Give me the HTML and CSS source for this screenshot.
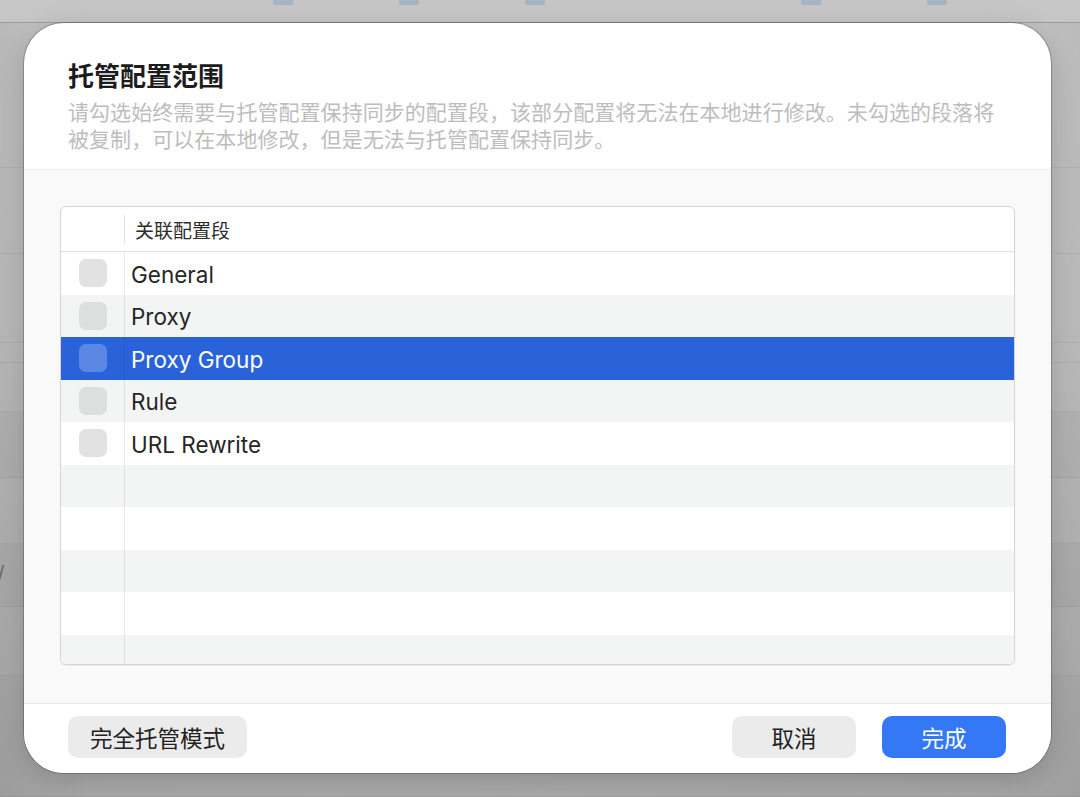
FILE: index.html
```html
<!DOCTYPE html>
<html lang="zh-CN">
<head>
<meta charset="utf-8">
<title>托管配置范围</title>
<link rel="stylesheet" href="styles.css">
</head>
<body>
<div class="backdrop">
  <div class="bg-toolbar">
    <span class="tb-icon"></span><span class="tb-text"></span>
    <span class="tb-icon"></span><span class="tb-text"></span>
    <span class="tb-icon"></span><span class="tb-text wide"></span>
    <span class="tb-icon"></span><span class="tb-text"></span>
    <span class="tb-icon"></span>
  </div>
  <div class="bg-row h145"></div>
  <div class="bg-row h86"></div>
  <div class="bg-row h89"></div>
  <div class="bg-row h20"></div>
  <div class="bg-row h49"><span class="bg-slash">/</span></div>
  <div class="bg-row h66 shade"></div>
  <div class="bg-row h66"></div>
  <div class="bg-row h63 shade"></div>
  <div class="bg-row h69"></div>
  <div class="bg-row h121 shade"></div>
</div>

<div class="sheet">
  <div class="sheet-head">
    <h1 class="title">托管配置范围</h1>
    <p class="desc">请勾选始终需要与托管配置保持同步的配置段，该部分配置将无法在本地进行修改。未勾选的段落将被复制，可以在本地修改，但是无法与托管配置保持同步。</p>
  </div>

  <div class="sheet-body">
    <div class="table">
      <div class="thead">
        <div class="th-check"></div>
        <div class="th-name">关联配置段</div>
      </div>
      <div class="tbody">
        <div class="row"><div class="cell-check"><span class="box"></span></div><div class="cell-name">General</div></div>
        <div class="row"><div class="cell-check"><span class="box"></span></div><div class="cell-name">Proxy</div></div>
        <div class="row selected"><div class="cell-check"><span class="box"></span></div><div class="cell-name">Proxy Group</div></div>
        <div class="row"><div class="cell-check"><span class="box"></span></div><div class="cell-name">Rule</div></div>
        <div class="row"><div class="cell-check"><span class="box"></span></div><div class="cell-name">URL Rewrite</div></div>
        <div class="row"><div class="cell-check"></div><div class="cell-name"></div></div>
        <div class="row"><div class="cell-check"></div><div class="cell-name"></div></div>
        <div class="row"><div class="cell-check"></div><div class="cell-name"></div></div>
        <div class="row"><div class="cell-check"></div><div class="cell-name"></div></div>
        <div class="row"><div class="cell-check"></div><div class="cell-name"></div></div>
      </div>
    </div>
  </div>

  <div class="sheet-foot">
    <button class="btn btn-mode">完全托管模式</button>
    <div class="spacer"></div>
    <button class="btn btn-cancel">取消</button>
    <button class="btn btn-done">完成</button>
  </div>
</div>
</body>
</html>
```

FILE: styles.css
```css
* { box-sizing: border-box; }

html, body {
  margin: 0;
  padding: 0;
  width: 1080px;
  height: 797px;
  overflow: hidden;
}

body {
  position: relative;
  font-family: "Noto Sans CJK SC", "Noto Sans", sans-serif;
  background: linear-gradient(to right, #b6b6b6 0%, #c6c6c6 8%, #c8c8c8 50%, #c4c4c4 92%, #b9b9b9 100%);
}

/* ---------- backdrop window ---------- */
.backdrop {
  display: flex;
  flex-direction: column;
  height: 797px;
  background: linear-gradient(to bottom, rgba(255,255,255,0.04) 0%, rgba(0,0,0,0) 40%, rgba(0,0,0,0.12) 100%);
}

.bg-toolbar {
  height: 23px;
  display: flex;
  align-items: flex-start;
  padding-left: 273px;
  border-bottom: 1px solid #9c9c9c;
  background: #c6c6c6;
}

.tb-icon {
  width: 20px;
  height: 5px;
  background: #a7b4c3;
  border-radius: 0 0 2px 2px;
}

.tb-text {
  width: 100px;
  height: 4px;
  margin-left: 6px;
}

.tb-text.wide { width: 250px; }

.bg-row {
  border-bottom: 1px solid rgba(0,0,0,0.05);
  position: relative;
}

.bg-row.shade { background: rgba(0,0,0,0.025); }

.h145 { height: 145px; }
.h86 { height: 86px; }
.h89 { height: 89px; }
.h20 { height: 20px; }
.h49 { height: 49px; }
.h66 { height: 66px; }
.h63 { height: 63px; }
.h69 { height: 69px; }
.h121 { height: 121px; }

.bg-slash {
  position: absolute;
  left: -2px;
  top: 198px;
  font-family: "Liberation Sans", sans-serif;
  font-size: 22px;
  color: #6e6e6e;
}

/* ---------- sheet ---------- */
.sheet {
  position: absolute;
  left: 24px;
  top: 23px;
  width: 1027px;
  height: 750px;
  border-radius: 40px;
  background: #ffffff;
  overflow: hidden;
  display: flex;
  flex-direction: column;
  box-shadow: 0 0 0 1px rgba(0,0,0,0.22), 0 8px 28px rgba(0,0,0,0.18);
}

.sheet-head {
  padding: 35px 44px 17px 44px;
  border-bottom: 1px solid #ececec;
}

.title {
  margin: 0;
  font-size: 26px;
  line-height: 34px;
  font-weight: 700;
  color: #1c1c1c;
}

.desc {
  margin: 6px 0 0 0;
  font-size: 21px;
  line-height: 27px;
  color: #bdbdbd;
  letter-spacing: 0.05px;
}

.sheet-body {
  flex: 1;
  background: #f9f9f9;
  padding: 36px 36px 0 36px;
}

/* ---------- table ---------- */
.table {
  height: 459px;
  border: 1px solid #d5d5d5;
  border-radius: 6px;
  background: #ffffff;
  overflow: hidden;
  box-shadow: 0 1px 1px rgba(0,0,0,0.06);
}

.thead {
  height: 45px;
  display: flex;
  align-items: center;
  border-bottom: 1px solid #e2e2e2;
}

.th-check {
  width: 64px;
  height: 28px;
  border-right: 1px solid #e2e2e2;
}

.th-name {
  padding-left: 10px;
  font-size: 19px;
  color: #2c2c2c;
}

.tbody {
  display: flex;
  flex-direction: column;
}

.row {
  display: flex;
  height: 42.5px;
  flex-shrink: 0;
  background: #ffffff;
}

.row:nth-child(even) { background: #f3f4f4; }

.row.selected { background: #2a63d9; }

.cell-check {
  width: 64px;
  display: flex;
  align-items: center;
  padding-left: 18px;
  border-right: 1px solid rgba(0,0,0,0.08);
}

.box {
  width: 28px;
  height: 28px;
  border-radius: 7px;
  background: #e2e2e2;
}

.row:nth-child(even) .box { background: #dddfdf; }

.row.selected .box { background: #5b88e4; }

.cell-name {
  flex: 1;
  display: flex;
  align-items: center;
  padding-left: 6px;
  padding-top: 2px;
  font-family: "Inter", "Noto Sans", sans-serif;
  font-size: 22.5px;
  color: #262626;
}

.row.selected .cell-name { color: #ffffff; }

/* ---------- footer ---------- */
.sheet-foot {
  height: 70px;
  border-top: 1px solid #e8e8e8;
  display: flex;
  align-items: flex-start;
  padding: 12px 45px 0 44px;
  background: #ffffff;
}

.spacer { flex: 1; }

.btn {
  height: 42px;
  border: none;
  border-radius: 10px;
  font-family: "Noto Sans CJK SC", sans-serif;
  font-size: 22.5px;
  font-weight: 400;
  padding: 0;
  line-height: 42px;
}

.btn-mode {
  width: 179px;
  background: #ebebeb;
  color: #222222;
}

.btn-cancel {
  width: 124px;
  background: #ebebeb;
  color: #222222;
}

.btn-done {
  width: 124px;
  margin-left: 26px;
  background: #3478f6;
  color: #ffffff;
}
```
